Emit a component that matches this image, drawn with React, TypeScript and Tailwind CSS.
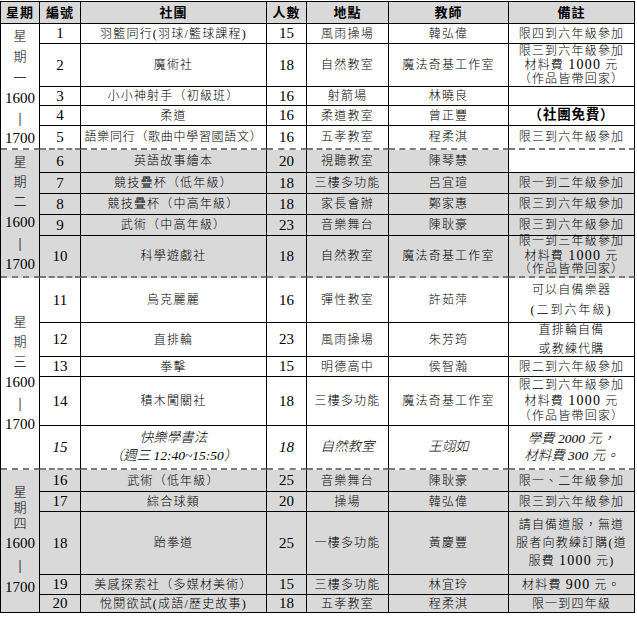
import React from "react";

type Row = {
  n: string;
  club: React.ReactNode;
  count: string;
  place: string;
  teacher: string;
  note: React.ReactNode;
  gray: boolean;
  noteWhite?: boolean;
  italic?: boolean;
  dashed?: boolean;
};

const L = (s: string) => <span className="block">{s}</span>;

const rows: Row[] = [
  { n: "1", club: "羽籃同行(羽球/籃球課程)", count: "15", place: "風雨操場", teacher: "韓弘偉", note: "限四到六年級參加", gray: false },
  {
    n: "2", club: "魔術社", count: "18", place: "自然教室", teacher: "魔法奇基工作室",
    note: (<div className="leading-[14px]">{L("限三到六年級參加")}<span className="block">材料費 <span className="text-[14px]">1000</span> 元</span>{L("（作品皆帶回家）")}</div>),
    gray: false,
  },
  { n: "3", club: "小小神射手（初級班）", count: "16", place: "射箭場", teacher: "林曉良", note: "", gray: false },
  { n: "4", club: "柔道", count: "16", place: "柔道教室", teacher: "曾正豐", note: (<span className="font-bold text-[13.5px] tracking-[0.8px]">（社團免費）</span>), gray: false },
  { n: "5", club: (<span className="tracking-[0.7px]">語樂同行（歌曲中學習國語文）</span>), count: "16", place: "五孝教室", teacher: "程柔淇", note: "限三到六年級參加", gray: false, dashed: true },
  { n: "6", club: "英語故事繪本", count: "20", place: "視聽教室", teacher: "陳琴慧", note: "", gray: true, noteWhite: true },
  { n: "7", club: "競技疊杯（低年級）", count: "18", place: "三樓多功能", teacher: "呂宜瑄", note: "限一到二年級參加", gray: true },
  { n: "8", club: "競技疊杯（中高年級）", count: "18", place: "家長會辦", teacher: "鄭家惠", note: "限三到六年級參加", gray: true },
  { n: "9", club: "武術（中高年級）", count: "23", place: "音樂舞台", teacher: "陳耿豪", note: "限三到六年級參加", gray: true },
  {
    n: "10", club: "科學遊戲社", count: "18", place: "自然教室", teacher: "魔法奇基工作室",
    note: (<div className="leading-[13.5px]">{L("限一到三年級參加")}<span className="block">材料費 <span className="text-[14px]">1000</span> 元</span>{L("（作品皆帶回家）")}</div>),
    gray: true, dashed: true,
  },
  {
    n: "11", club: "烏克麗麗", count: "16", place: "彈性教室", teacher: "許茹萍",
    note: (<div className="leading-[20px]">{L("可以自備樂器")}<span className="block tracking-[2px]">(二到六年級)</span></div>),
    gray: false,
  },
  {
    n: "12", club: "直排輪", count: "23", place: "風雨操場", teacher: "朱芳筠",
    note: (<div className="leading-[19px]">{L("直排輪自備")}{L("或教練代購")}</div>),
    gray: false,
  },
  { n: "13", club: "拳擊", count: "15", place: "明德高中", teacher: "侯智瀚", note: "限二到六年級參加", gray: false },
  {
    n: "14", club: "積木闖關社", count: "18", place: "三樓多功能", teacher: "魔法奇基工作室",
    note: (<div className="leading-[15px]">{L("限二到六年級參加")}<span className="block">材料費 <span className="text-[14px]">1000</span> 元</span>{L("（作品皆帶回家）")}</div>),
    gray: false,
  },
  {
    n: "15",
    club: (<div className="leading-[18px] text-[13.5px] tracking-normal">{L("快樂學書法")}{L("（週三 12:40~15:50）")}</div>),
    count: "18", place: "自然教室", teacher: "王翊如",
    note: (<div className="leading-[17px] text-[13.5px] tracking-normal">{L("學費 2000 元，")}{L("材料費 300 元。")}</div>),
    gray: false, italic: true, dashed: true,
  },
  { n: "16", club: "武術（低年級）", count: "25", place: "音樂舞台", teacher: "陳耿豪", note: "限一、二年級參加", gray: true },
  { n: "17", club: "綜合球類", count: "20", place: "操場", teacher: "韓弘偉", note: "限三到六年級參加", gray: true },
  {
    n: "18", club: "跆拳道", count: "25", place: "一樓多功能", teacher: "黃慶豐",
    note: (<div className="leading-[18px]">{L("請自備道服，無道")}{L("服者向教練訂購(道")}<span className="block">服費 <span className="text-[14px]">1000</span> 元)</span></div>),
    gray: true,
  },
  { n: "19", club: "美感探索社（多媒材美術）", count: "15", place: "三樓多功能", teacher: "林宜玲", note: (<span>材料費 <span className="text-[14px]">900</span> 元。</span>), gray: true },
  { n: "20", club: "悅閱欲試(成語/歷史故事)", count: "18", place: "五孝教室", teacher: "程柔淇", note: "限一到四年級", gray: true },
];

const days = [
  { d: "一", span: "row-span-5", gray: false, dashed: true, cjk: "leading-[21px]", num: "leading-[20px]" },
  { d: "二", span: "row-span-5", gray: true, dashed: true, cjk: "leading-[20px]", num: "leading-[21px]" },
  { d: "三", span: "row-span-5", gray: false, dashed: true, cjk: "leading-[20px]", num: "leading-[21px]" },
  { d: "四", span: "row-span-5", gray: true, dashed: false, cjk: "leading-[16px]", num: "leading-[22px]" },
];

const base = "border-r border-b border-black flex flex-col items-center justify-center text-center";
const dashedCls = "border-b-2 border-b-[#7a7a7a] [border-bottom-style:dashed]";

function Cell({ children, className = "" }: { children?: React.ReactNode; className?: string }) {
  return <div className={`${base} ${className}`}>{children}</div>;
}

export default function App() {
  const headers = ["星期", "編號", "社團", "人數", "地點", "教師", "備註"];
  return (
    <div className="bg-white w-[637px] h-[618px] pt-[1px] text-black" style={{ fontFamily: '"Liberation Serif", "Noto Sans CJK TC", serif' }}>
      <div className="grid w-max border-l border-t border-black grid-cols-[39px_41px_186px_40px_82px_120px_126px] grid-rows-[22px_20px_43px_19px_20px_24px_23px_21px_21px_21px_42px_45px_34px_20px_49px_44px_22px_20px_63px_20px_18px] text-[12px] tracking-[1.2px] font-light">
        {headers.map((h) => (
          <Cell key={h} className="bg-[#d9d9d9] font-bold text-[13px] tracking-[1px]">{h}</Cell>
        ))}
        {rows.map((r, i) => {
          const bg = r.gray ? "bg-[#d9d9d9]" : "bg-white";
          const dash = r.dashed ? dashedCls : "";
          const it = r.italic ? "italic" : "";
          const dayIdx = Math.floor(i / 5);
          const day = days[dayIdx];
          return (
            <React.Fragment key={r.n}>
              {i % 5 === 0 && (
                <Cell className={`${day.span} ${day.gray ? "bg-[#d9d9d9]" : "bg-white"} ${day.dashed ? dashedCls : ""} tracking-normal`}>
                  <span className={`block text-[13px] ${day.cjk}`}>星</span>
                  <span className={`block text-[13px] ${day.cjk}`}>期</span>
                  <span className={`block text-[13px] ${day.cjk}`}>{day.d}</span>
                  <span className={`block text-[15px] font-normal ${day.num}`}>1600</span>
                  <span className={`block text-[15px] font-normal ${day.num}`}>|</span>
                  <span className={`block text-[15px] font-normal ${day.num}`}>1700</span>
                </Cell>
              )}
              <Cell className={`${bg} ${dash} ${it} text-[15px] font-normal tracking-normal`}>{r.n}</Cell>
              <Cell className={`${bg} ${dash} ${it}`}>{r.club}</Cell>
              <Cell className={`${bg} ${dash} ${it} text-[15px] font-normal tracking-normal`}>{r.count}</Cell>
              <Cell className={`${bg} ${dash} ${it} ${r.italic ? "text-[13.5px] tracking-normal" : ""}`}>{r.place}</Cell>
              <Cell className={`${bg} ${dash} ${it} ${r.italic ? "text-[13.5px] tracking-normal" : ""}`}>{r.teacher}</Cell>
              <Cell className={`${r.noteWhite ? "bg-white" : bg} ${dash} ${it}`}>{r.note}</Cell>
            </React.Fragment>
          );
        })}
      </div>
    </div>
  );
}
